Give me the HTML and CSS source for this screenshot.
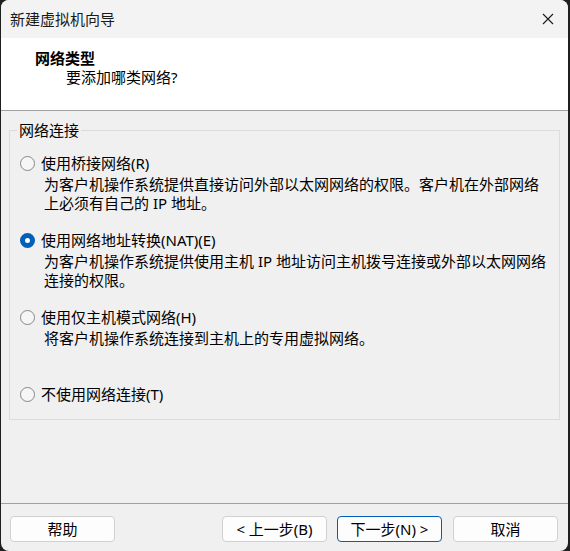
FILE: index.html
```html
<!DOCTYPE html>
<html lang="zh-CN">
<head>
    <meta charset="UTF-8">
    <title>新建虚拟机向导</title>
    <link rel="stylesheet" href="styles.css">
</head>
<body>
    <div class="window">
        <div class="titlebar">
            <span class="title">新建虚拟机向导</span>
            <svg class="close" width="12" height="12" viewBox="0 0 12 12">
                <path d="M1 1 L11 11 M11 1 L1 11" stroke="#1a1a1a" stroke-width="1.1" fill="none"/>
            </svg>
        </div>

        <div class="header">
            <div class="header-title">网络类型</div>
            <div class="header-sub">要添加哪类网络?</div>
        </div>

        <div class="content">
            <fieldset class="group">
                <legend>网络连接</legend>

                <!-- 桥接 -->
                <div class="option">
                    <label class="radio-row"><span class="radio"></span>使用桥接网络(R)</label>
                    <div class="desc">为客户机操作系统提供直接访问外部以太网网络的权限。客户机在外部网络<br>上必须有自己的 IP 地址。</div>
                </div>

                <!-- NAT -->
                <div class="option">
                    <label class="radio-row"><span class="radio checked"></span>使用网络地址转换(NAT)(E)</label>
                    <div class="desc">为客户机操作系统提供使用主机 IP 地址访问主机拨号连接或外部以太网网络<br>连接的权限。</div>
                </div>

                <!-- 仅主机 -->
                <div class="option">
                    <label class="radio-row"><span class="radio"></span>使用仅主机模式网络(H)</label>
                    <div class="desc">将客户机操作系统连接到主机上的专用虚拟网络。</div>
                </div>

                <div class="option last">
                    <label class="radio-row"><span class="radio"></span>不使用网络连接(T)</label>
                </div>
            </fieldset>
        </div>

        <div class="footer">
            <button class="btn">帮助</button>
            <div class="spacer"></div>
            <button class="btn">&lt; 上一步(B)</button>
            <button class="btn default">下一步(N) &gt;</button>
            <button class="btn cancel">取消</button>
        </div>
    </div>
</body>
</html>
```

FILE: styles.css
```css
* {
    box-sizing: border-box;
    margin: 0;
    padding: 0;
}
html, body {
    width: 570px;
    height: 551px;
    overflow: hidden;
}
body {
    background-color: #1f1f1f;
    font-family: 'Noto Sans', 'Noto Sans CJK SC', sans-serif;
    font-size: 15px;
    line-height: 19px;
    color: #000;
}
.window {
    width: 567px;
    height: 551px;
    margin-left: 1px;
    background-color: #f0f0f0;
    border-radius: 8px;
    overflow: hidden;
    display: flex;
    flex-direction: column;
}
.titlebar {
    height: 38px;
    flex-shrink: 0;
    background-color: #f3f3f3;
    display: flex;
    align-items: center;
    justify-content: space-between;
    padding: 0 14px 0 9px;
}
.title {
    color: #1a1a1a;
}
.header {
    height: 73px;
    flex-shrink: 0;
    background-color: #fff;
    padding: 11px 0 0 34px;
    border-bottom: 1px solid #a0a0a0;
}
.header-title {
    font-weight: bold;
}
.header-sub {
    padding-left: 31px;
}
.content {
    flex: 1;
    padding: 10px 8px 0 8px;
}
.group {
    border: 1px solid #dcdcdc;
    padding: 14px 7px 15px 7px;
}
.group legend {
    padding: 0 2px;
}
.option {
    margin-bottom: 18px;
}
.option.last {
    margin-bottom: 0;
}
.radio-row {
    display: flex;
    align-items: center;
    padding-left: 3px;
}
.radio {
    width: 15px;
    height: 15px;
    border-radius: 50%;
    border: 1px solid #878787;
    background-color: #f6f6f6;
    margin-right: 6px;
    flex-shrink: 0;
}
.radio.checked {
    border: 5px solid #005fb8;
    background-color: #fff;
}
.desc {
    margin-top: 2px;
    padding-left: 27px;
    min-height: 38px;
}
.footer {
    height: 48px;
    flex-shrink: 0;
    border-top: 1px solid #a0a0a0;
    display: flex;
    align-items: flex-start;
    padding: 12px 10px 0 9px;
}
.spacer {
    flex: 1;
}
.btn {
    width: 105px;
    height: 26px;
    font-family: inherit;
    font-size: 15px;
    line-height: 19px;
    color: #000;
    background-color: #fdfdfd;
    border: 1px solid #d0d0d0;
    border-radius: 4px;
    margin-left: 10px;
}
.btn:first-child {
    margin-left: 0;
}
.btn.default {
    border-color: #005fb8;
}
.btn.cancel {
    margin-left: 11px;
}
```
